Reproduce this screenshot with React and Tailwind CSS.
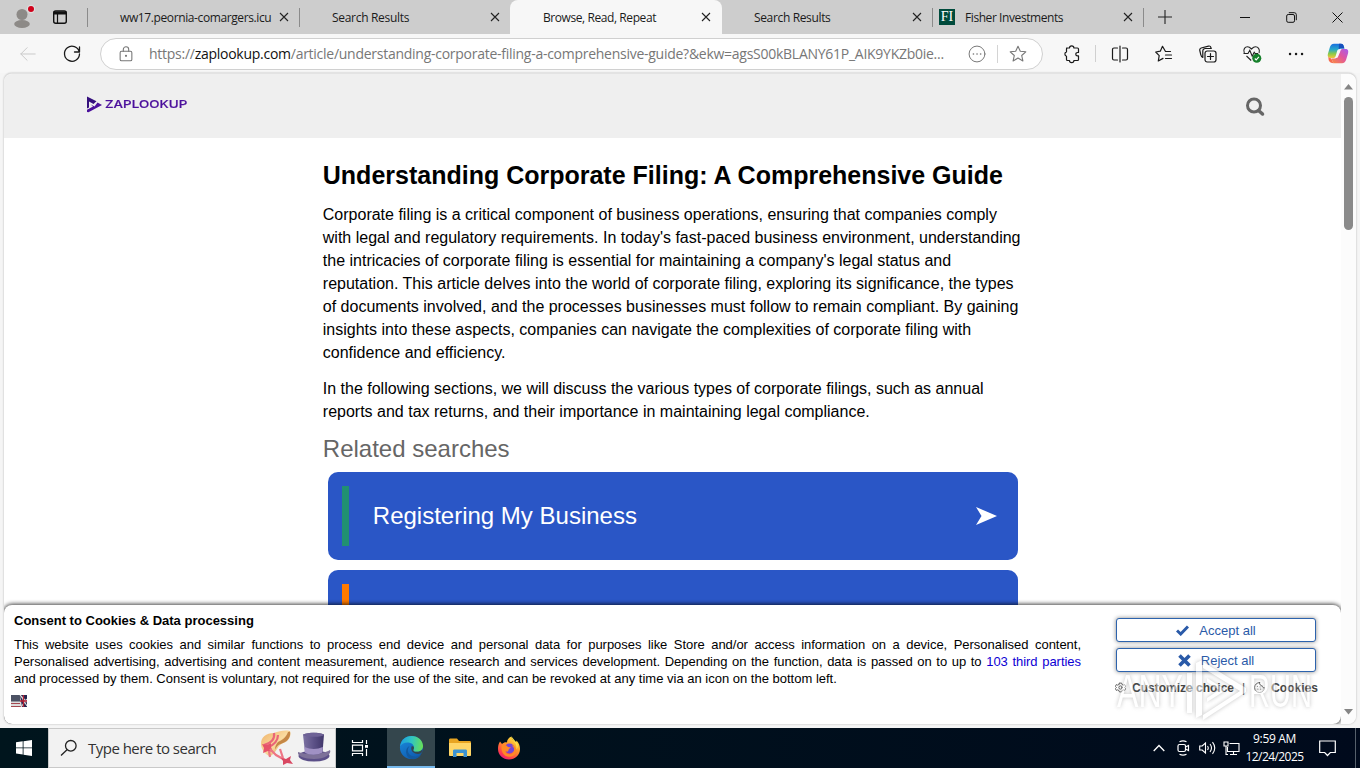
const ui = "font-['Open_Sans','Noto_Sans',sans-serif]";

const tabs = [
    { title: 'ww17.peornia-comargers.icu', tracking: 'tracking-[-0.39px]', className: 'w-[212px] pl-[33px] pr-[10px]', line: true },
    { title: 'Search Results', tracking: 'tracking-[-0.3px]', className: 'w-[211px] pl-[33px] pr-[10px]' },
    { title: 'Browse, Read, Repeat', tracking: 'tracking-[-0.42px]', className: 'w-[212px] rounded-t-lg bg-[#f7f7f7] pl-[33px] pr-[11px]' },
    { title: 'Search Results', tracking: 'tracking-[-0.35px]', className: 'w-[210px] pl-[32px] pr-[10px]' },
    { title: 'Fisher Investments', tracking: 'tracking-[-0.42px]', className: 'w-[211px] pl-[7px] pr-[10px]', icon: true, line: true },
];

const article = [
    [
        'Corporate filing is a critical component of business operations, ensuring that companies comply',
        "with legal and regulatory requirements. In today's fast-paced business environment, understanding",
        "the intricacies of corporate filing is essential for maintaining a company's legal status and",
        'reputation. This article delves into the world of corporate filing, exploring its significance, the types',
        'of documents involved, and the processes businesses must follow to remain compliant. By gaining',
        'insights into these aspects, companies can navigate the complexities of corporate filing with',
        'confidence and efficiency.',
    ],
    [
        'In the following sections, we will discuss the various types of corporate filings, such as annual',
        'reports and tax returns, and their importance in maintaining legal compliance.',
    ],
];

function Icon({ size = 20, className = '', stroke = 1.1, children }) {
    return (
        <svg
            width={size}
            height={size}
            viewBox="0 0 20 20"
            fill="none"
            stroke="currentColor"
            strokeWidth={stroke}
            strokeLinecap="round"
            strokeLinejoin="round"
            className={`shrink-0 ${className}`}
        >
            {children}
        </svg>
    );
}

function CloseIcon() {
    return (
        <svg width="10" height="10" viewBox="0 0 10 10" stroke="#222" strokeWidth="1.1" className="shrink-0">
            <path d="M1 1l8 8M9 1l-8 8" />
        </svg>
    );
}

const starPath = 'M10 2.2l2.3 5 5.5.6-4.1 3.7 1.2 5.4L10 14.1l-4.9 2.8 1.2-5.4L2.2 7.8l5.5-.6z';

function TabStrip() {
    return (
        <div className="flex h-[34px] shrink-0 items-stretch bg-[#cdcdcd]">
            <div className="flex w-[87px] shrink-0 items-center">
                <svg width="87" height="34" viewBox="0 0 87 34">
                    <circle cx="22" cy="14.5" r="5.5" fill="#8d8a87" />
                    <ellipse cx="22" cy="24" rx="7.8" ry="4" fill="#8d8a87" />
                    <circle cx="31" cy="9" r="4.2" fill="#dedede" />
                    <circle cx="31" cy="9" r="3" fill="#d0021b" />
                    <rect x="53.7" y="11" width="12.6" height="12.3" rx="2" fill="none" stroke="#111" strokeWidth="1.4" />
                    <path d="M53.5 11.5h13v3h-13z" fill="#111" />
                    <path d="M57.5 14v9" stroke="#111" strokeWidth="1.2" />
                </svg>
            </div>
            {tabs.map((tab, i) => (
                <div key={i} className={`relative flex shrink-0 items-center ${tab.className}`}>
                    {tab.line && <span className="absolute left-0 top-2 h-[19px] w-px bg-[#8b8b8b]" />}
                    {tab.line && <span className="absolute -right-px top-2 h-[19px] w-px bg-[#8b8b8b]" />}
                    {tab.icon && (
                        <span className="mr-[10px] flex size-4 items-center justify-center bg-[#004b3c] font-['Liberation_Serif',serif] text-[14px] leading-none text-white">
                            FI
                        </span>
                    )}
                    <span className={`flex-1 whitespace-nowrap pt-px text-xs text-[#1b1b1b] ${tab.tracking}`}>{tab.title}</span>
                    <CloseIcon />
                </div>
            ))}
            <div className="flex w-[44px] items-center justify-center">
                <svg width="14" height="14" viewBox="0 0 14 14" stroke="#222" strokeWidth="1.1">
                    <path d="M7 0v14M0 7h14" />
                </svg>
            </div>
            <div className="ml-auto flex w-[138px] items-center">
                <div className="flex w-[46px] justify-center">
                    <svg width="10" height="10" stroke="#111"><path d="M0 5.5h10" /></svg>
                </div>
                <div className="flex w-[46px] justify-center">
                    <svg width="11" height="11" viewBox="0 0 11 11" fill="none" stroke="#111">
                        <rect x=".7" y="2.5" width="7.8" height="7.8" rx="1.5" />
                        <path d="M2.8.7h5.5a2 2 0 0 1 2 2v5.5" />
                    </svg>
                </div>
                <div className="flex w-[46px] justify-center">
                    <svg width="11" height="11" viewBox="0 0 11 11" stroke="#111"><path d="M.5.5l10 10M10.5.5l-10 10" /></svg>
                </div>
            </div>
        </div>
    );
}

function CopilotIcon() {
    return (
        <svg width="22" height="21" viewBox="0 0 22 21">
            <defs>
                <linearGradient id="cpA" x1="0" y1="0" x2="0" y2="1">
                    <stop offset="0" stopColor="#1a6fe0" />
                    <stop offset=".4" stopColor="#28a9c9" />
                    <stop offset=".7" stopColor="#8ccb48" />
                    <stop offset="1" stopColor="#f5c73a" />
                </linearGradient>
                <linearGradient id="cpB" x1="1" y1="0" x2="0" y2="1">
                    <stop offset="0" stopColor="#a45cf0" />
                    <stop offset=".45" stopColor="#e0559f" />
                    <stop offset="1" stopColor="#fb8b3f" />
                </linearGradient>
            </defs>
            <path d="M7 .8h7c1.6 0 2.2.8 2.6 2l.8 2.6h-3.4c-1.5 0-3.3.8-3.7 2.2l-1.6 5.4c-.4 1.4-1.2 2-2.6 2H3.5C.9 15 .3 13 1 10.6l1.8-6C3.5 2.2 4.8.8 7 .8z" fill="url(#cpA)" />
            <path d="M15 20.2H8c-1.6 0-2.2-.8-2.6-2l-.8-2.6H7c1.5 0 3.3-.8 3.7-2.2L13.3 8c.4-1.400 1.200-2 2.600-2h2.600c2.600 0 3.200 2 2.500 4.400l-1.800 6c-.7 2.400-2 3.800-4.200 3.800z" fill="url(#cpB)" />
            <path d="M11.5 7.5l2 .1-2.800 7-2.200-.2z" fill="#f7f7f7" />
            <path d="M12 .8h2c1.600 0 2.200.8 2.600 2l.8 2.600h-3.400c-1.100 0-1.800.4-2.300 1.200z" fill="#1650bd" />
            <path d="M1.300 14c2 1.300 3.100.9 3.700 2.900.5 1.800 1.100 3.300 3 3.300-3.500.2-5.400-.5-6.300-2.900z" fill="#f66c4e" />
        </svg>
    );
}

function Toolbar() {
    return (
        <div className="flex h-[39px] shrink-0 items-center bg-[#f7f7f7] text-[#1a1a1a]">
            <div className="flex w-14 shrink-0 justify-center text-[#c9c9c9]">
                <Icon size={18}><path d="M18 10H2M9 3l-7 7 7 7" /></Icon>
            </div>
            <div className="flex w-8 shrink-0 justify-center">
                <Icon size={20} stroke={1.3}><path d="M17.3 8A7.5 7.5 0 1 0 17.5 10M17.5 3v5h-5" /></Icon>
            </div>
            <div className="ml-3 flex h-8 w-[943px] shrink-0 items-center rounded-full border border-[#d0d0d0] bg-white text-[#777]">
                <Icon size={18} className="ml-4" stroke={1.2}>
                    <rect x="3.5" y="7" width="13" height="10.5" rx="1.5" />
                    <path d="M7 7V5a3 3 0 0 1 6 0v2" />
                    <circle cx="10" cy="12" r=".6" fill="currentColor" />
                </Icon>
                <span className="ml-[14px] w-[795px] shrink-0 whitespace-nowrap pt-px text-sm tracking-[-0.265px] text-[#777]">
                    https://<span className="text-[#111]">zaplookup.com</span>/article/understanding-corporate-filing-a-comprehensive-guide?&amp;ekw=agsS00kBLANY61P_AIK9YKZb0ie...
                </span>
                <Icon size={18} className="ml-6">
                    <circle cx="10" cy="10" r="8.8" />
                    <path d="M6 10h.1M10 10h.1M14 10h.1" strokeWidth="1.8" />
                </Icon>
                <span className="ml-[11px] h-[18px] w-px bg-[#d4d4d4]" />
                <Icon size={20} className="ml-[10px]"><path d={starPath} /></Icon>
            </div>
            <div className="ml-[19px] flex w-5 shrink-0 justify-center">
                <Icon size={20} stroke={1.2}>
                    <path d="M4.5 4h3a2.2 2.2 0 0 1 4.400 0h3.600a1 1 0 0 1 1 1v3.500h-1a1.700 1.700 0 0 0 0 3.400h1v3.600a1 1 0 0 1-1 1h-3.600a2.200 2.200 0 0 1-4.400 0h-2a1 1 0 0 1-1-1v-3.200a2.300 2.300 0 0 1 0-4.400V5a1 1 0 0 1 1-1z" />
                </Icon>
            </div>
            <span className="ml-[13px] h-[17px] w-px bg-[#d0d0d0]" />
            <div className="ml-[1px] flex shrink-0">
                <div className="flex w-[45px] justify-center">
                    <Icon size={20} stroke={1.2}>
                        <path d="M10 2v16M7.5 4H4a1.5 1.5 0 0 0-1.5 1.5v9A1.5 1.5 0 0 0 4 16h3.500M12.5 4H16a1.5 1.5 0 0 1 1.5 1.5v9A1.5 1.5 0 0 1 16 16h-3.500" />
                    </Icon>
                </div>
                <div className="flex w-11 justify-center">
                    <Icon size={20} stroke={1.2}>
                        <path d="M16.5 7.5h-5L8.500 2.300 6.300 7.200 1.700 8l3.500 3.700-.9 5.300 4.700-2.600M11.500 11h6M11.500 14.500h6" />
                    </Icon>
                </div>
                <div className="flex w-11 justify-center">
                    <Icon size={20} stroke={1.2}>
                        <rect x="7" y="7" width="11" height="11" rx="2.2" />
                        <path d="M12.5 9.500v6M9.500 12.500h6M4.800 13.500C3.200 12.800 3 11.500 2.700 10.300L1.800 6.500A2 2 0 0 1 3.200 4l7.300-1.900a2 2 0 0 1 2.400 1.400l.2 1M4.800 13.500V7a2.500 2.500 0 0 1 2.500-2.500h6" />
                    </Icon>
                </div>
                <div className="flex w-11 justify-center">
                    <svg width="20" height="20" viewBox="0 0 20 20" fill="none" stroke="#222" strokeWidth="1.1">
                        <path d="M2.300 9C.7 5 3.300 2.800 5.500 2.800c2 0 3 1.200 4 2.200 1-1 2-2.200 4-2.200 2.300 0 4.800 2.200 3.600 6.200M4.500 12l4.700 4.500M1.500 9.500H6l1.800-3.300 2.400 6 2-4 1 1.300h3" />
                        <circle cx="14.8" cy="14.3" r="4.5" fill="#16802b" stroke="none" />
                        <path d="M12.800 14.500l1.400 1.400 2.700-3" stroke="#fff" />
                    </svg>
                </div>
                <div className="flex w-11 justify-center">
                    <Icon size={20}><path d="M4 10h.1M10 10h.1M16 10h.1" strokeWidth="2.4" /></Icon>
                </div>
            </div>
            <div className="flex w-10 shrink-0 justify-center pb-px"><CopilotIcon /></div>
        </div>
    );
}

function Logo() {
    return (
        <div className="flex items-center gap-[3px] text-[#4b109c]">
            <svg width="15" height="17" viewBox="0 0 15 17">
                <path d="M0 .5l9.5 4.7-3 2.800L2 5.500v6L0 12.500z" fill="#35107d" />
                <path d="M3.500 8.200l4 2.200L10.500 6.500 15 9 1.500 16.300 0 16v-2.300l6-3.200z" fill="#4b109c" />
            </svg>
            <span className="origin-left scale-x-[1.22] font-[Inter,sans-serif] text-[11px] font-medium leading-none [-webkit-text-stroke:0.2px_#4b109c]">ZAPLOOKUP</span>
        </div>
    );
}

function SearchCard({ title, bar }) {
    return (
        <div className="ml-[5px] flex h-[88px] w-[690px] shrink-0 items-center rounded-[10px] bg-[#2a56c6] pl-[14px] pr-[21px]">
            <span className={`h-[60px] w-[7px] ${bar}`} />
            <span className="ml-6 flex-1 text-2xl text-white">{title}</span>
            {title && (
                <svg width="21" height="18" viewBox="0 0 21 18" fill="#fff"><path d="M0 0l21 9-21 9 5.5-9z" /></svg>
            )}
        </div>
    );
}

function Flag() {
    return (
        <svg width="16" height="12" viewBox="0 0 16 12">
            <rect width="16" height="12" fill="#ddd" />
            <path d="M0 8.5h9M0 11.5h11" stroke="#a34851" />
            <rect width="9" height="6.500" fill="#4c5264" />
            <path d="M9 0h7v12h-5z" fill="#23264f" />
            <path d="M9 0l7 7M16 4l-6 8M10 1l6 10" stroke="#ddd" strokeWidth="1.1" />
            <path d="M9 6h7M12.5 0v12" stroke="#b52235" strokeWidth="1.3" />
        </svg>
    );
}

function Watermark() {
    return (
        <svg
            width="225"
            height="70"
            viewBox="0 0 225 70"
            fill="#fff"
            className="pointer-events-none absolute left-[1108px] top-[50px] font-['Liberation_Sans',sans-serif] text-[47px] opacity-50 drop-shadow-[0_0_2px_#888]"
        >
            <text x="5" y="52" textLength="66" lengthAdjust="spacingAndGlyphs">ANY</text>
            <text x="137" y="52" textLength="63" lengthAdjust="spacingAndGlyphs">RUN</text>
            <path d="M75 18h5v40h-5zM84 8l6-3v55l-6 3z" />
            <path d="M91 7l43 26v4L91 65v-5l37-24-37-23zM95 23l19 12-19 12v-4l12-8-12-8z" />
        </svg>
    );
}

const consentButton = 'flex h-6 w-[200px] items-center justify-center gap-[10px] rounded-[3px] border border-[#2d63ad] bg-white shadow-[0_0_4px_#888]';

function CookieBanner() {
    return (
        <div className="absolute bottom-0 left-0 flex h-[119px] w-[1337px] rounded-lg bg-white text-[13px] leading-[17px] text-black shadow-[0_0_4px_1px_rgba(0,0,0,0.75)]">
            <div className="ml-[10px] mt-[7px] w-[1067px] shrink-0">
                <p className="text-[13px] font-bold leading-[18px]">Consent to Cookies &amp; Data processing</p>
                <div className="mt-[6px] text-[13px]">
                    <p className="text-justify tracking-[-0.03px] [text-align-last:justify]">This website uses cookies and similar functions to process end device and personal data for purposes like Store and/or access information on a device, Personalised content,</p>
                    <p className="text-justify tracking-[-0.03px] [text-align-last:justify]">
                        Personalised advertising, advertising and content measurement, audience research and services development. Depending on the function, data is passed on to up to{' '}
                        <span className="text-[#0d00d4]">103 third parties</span>
                    </p>
                    <p className="whitespace-nowrap">and processed by them. Consent is voluntary, not required for the use of the site, and can be revoked at any time via an icon on the bottom left.</p>
                </div>
                <div className="-ml-[3px] mt-2"><Flag /></div>
            </div>
            <div className="ml-[35px] mt-[13px] w-[210px] shrink-0 text-[#2a5aa8]">
                <button className={consentButton}>
                    <svg width="13" height="11" viewBox="0 0 13 11" fill="none" stroke="currentColor" strokeWidth="3"><path d="M1 5.5l3.7 3.5L12 1.5" /></svg>
                    <span className="text-[13px]">Accept all</span>
                </button>
                <button className={`mt-[6px] ${consentButton}`}>
                    <svg width="13" height="13" viewBox="0 0 13 13" stroke="currentColor" strokeWidth="3.6"><path d="M1.5 1.5l10 10M11.5 1.5l-10 10" /></svg>
                    <span className="text-[13px]">Reject all</span>
                </button>
                <div className="-ml-px mt-2 flex items-center whitespace-nowrap text-[12px] font-bold text-[#444]">
                    <Icon size={11} stroke={1.5} className="-mt-[3px] mr-[6px]">
                        <path d="M8 2h4l.7 2.500 2.700 1.200 2.200-1 1.700 3.300-1.800 2 1.800 2-1.700 3.300-2.200-1-2.700 1.200L12 18H8l-.7-2.500-2.700-1.200-2.200 1L.7 12l1.800-2-1.800-2 1.700-3.300 2.200 1 2.700-1.200z" />
                        <circle cx="10" cy="10" r="3" />
                    </Icon>
                    <span>Customize choice</span>
                    <span className="ml-[8px] mr-[9px] font-normal">|</span>
                    <Icon size={11} stroke={1.5} className="-mt-[3px] mr-[6px]">
                        <path d="M10 1a9 9 0 1 0 9 9c-2 1-4-.5-4-3-3 0-5-2-5-6zM6 8h.1M7 13h.1M12 13h.1M11 9h.1" />
                    </Icon>
                    <span>Cookies</span>
                </div>
            </div>
            <Watermark />
        </div>
    );
}

function Page() {
    return (
        <div className="mx-1 flex h-[651px] shrink-0 overflow-hidden rounded-lg border-t border-[#e3e3e3] bg-white shadow-[0_0_2px_#aaa]">
            <div className="relative flex w-[1337px] shrink-0 flex-col overflow-hidden font-['Liberation_Sans',Arial,sans-serif] text-black">
                <header className="flex h-16 shrink-0 items-center justify-between bg-[#efefef] pl-[83px] pr-[76px]">
                    <div className="-mt-1"><Logo /></div>
                    <svg width="20" height="20" viewBox="0 0 20 20" fill="none" stroke="#666" className="mt-px">
                        <circle cx="9" cy="8.500" r="6.500" strokeWidth="3" />
                        <path d="M13.500 13.500l4 3.500" strokeWidth="3.500" strokeLinecap="round" />
                    </svg>
                </header>
                <main className="ml-[318.8px] flex h-[600px] w-[700px] shrink-0 flex-col">
                    <h1 className="mt-[21px] whitespace-nowrap text-[25px] font-bold leading-8">Understanding Corporate Filing: A Comprehensive Guide</h1>
                    <div className="mt-3 flex flex-col gap-[13px]">
                        {article.map((lines, i) => (
                            <p key={i} className="text-base leading-[23px]">
                                {lines.map((line) => (
                                    <span key={line} className="block whitespace-nowrap">{line}</span>
                                ))}
                            </p>
                        ))}
                    </div>
                    <h2 className="mt-[10px] text-2xl leading-8 text-[#666]">Related searches</h2>
                    <div className="mt-[7px] flex flex-col gap-[10px]">
                        <SearchCard title="Registering My Business" bar="bg-[#219072]" />
                        <SearchCard title="" bar="bg-[#ff7a00]" />
                    </div>
                </main>
                <CookieBanner />
            </div>
            <div className="flex flex-1 flex-col items-center bg-[#fcfcfc] pt-[10px] pb-[9px]">
                <svg width="9" height="6" viewBox="0 0 9 6" fill="#858585"><path d="M4.5 0L9 5.5H0z" /></svg>
                <span className="mt-[7px] h-[133px] w-[9px] rounded-full bg-[#8a8a8a]" />
                <svg width="9" height="6" viewBox="0 0 9 6" fill="#858585" className="mt-auto"><path d="M4.5 5.5L9 0H0z" /></svg>
            </div>
        </div>
    );
}

function Hats() {
    return (
        <svg width="72" height="38" viewBox="0 0 72 38">
            <defs>
                <linearGradient id="straw" x1="0" y1="0" x2="1" y2="1">
                    <stop offset="0" stopColor="#eeb067" />
                    <stop offset=".5" stopColor="#fadb9f" />
                    <stop offset="1" stopColor="#d09650" />
                </linearGradient>
                <linearGradient id="top" x1="0" y1="0" x2="1" y2="0">
                    <stop offset="0" stopColor="#7c72a2" />
                    <stop offset=".5" stopColor="#5d5288" />
                    <stop offset="1" stopColor="#40366a" />
                </linearGradient>
            </defs>
            <path d="M1 15C1 8 6 4 14 4c5-2 11-3 16-2 2 5-2 11-7 12-5 2-6 8-10 11-1 1-2 2-4 2-4-2-8-7-8-12z" fill="url(#straw)" />
            <path d="M18 13c4-2 8-4 10-10l2-.5c1 5-2 10-8 12-4 1-5 3-7 6 0-3 1-5 3-7.500z" fill="#c58746" />
            <path d="M14 4c1 6-3 10-10 12M18 6c0 5-4 10-11 13" stroke="#ea6678" strokeWidth="2.2" fill="none" />
            <path d="M2 15l5 1 4-2 0 4 2 5-5-1-5 2 1-5z" fill="#e65369" />
            <path d="M10 20l6 6 9 5M20 20l3 9M9 22l1 6" stroke="#ee7585" strokeWidth="2.2" fill="none" />
            <path d="M21 29l5 1 5-3-1 4 3 4-6-1-4 2 0-4z" fill="#d94862" />
            <ellipse cx="54" cy="27" rx="15.500" ry="5.500" fill="#5b4f88" />
            <path d="M38 23c7 3 24 3 32-2 2 4-5 9-16 9-10 0-17-3-16-7z" fill="#7d7199" />
            <path d="M43 5.500c6-2.500 16-2.500 21 0l-1.500 18c-5 3-13 3-17.500 0z" fill="url(#top)" />
            <path d="M44.500 18c6 2.500 12.500 2.500 18.300 0l-.4 5.500c-5 3-13 3-17.500 0z" fill="#a091c4" />
            <ellipse cx="53.500" cy="5.800" rx="10.500" ry="2" fill="#6e6296" />
        </svg>
    );
}

function EdgeIcon() {
    return (
        <svg width="25" height="25" viewBox="0 0 26 26">
            <defs>
                <linearGradient id="edA" x1="0" y1=".3" x2="1" y2=".4">
                    <stop offset="0" stopColor="#1b9de2" />
                    <stop offset=".5" stopColor="#31c5c0" />
                    <stop offset="1" stopColor="#67df58" />
                </linearGradient>
                <linearGradient id="edB" x1="0" y1="0" x2=".6" y2="1">
                    <stop offset="0" stopColor="#1a8de0" />
                    <stop offset="1" stopColor="#0f5cb0" />
                </linearGradient>
            </defs>
            <circle cx="13" cy="13" r="12" fill="url(#edB)" />
            <path d="M1.200 12C2 5 7 1 13 1c7 0 12 5 12 10.500 0 4-3 6-6.500 6-3 0-4-1-3.500-2.500 1-2.500.5-6-4-7-4-.9-8 .6-9.800 4z" fill="url(#edA)" />
            <path d="M11 11.500c-4 5-1 11 6 11 2.500 0 4.500-.8 6-2.300C21 24 17 25.500 13 25 7 24 5 14 11 11.500z" fill="#12599f" />
            <path d="M13 12c3-1 3 2 2 3-.7 1.500.5 2.500 3.500 2.500 2.500 0 4.500-1 5.700-2.500.6 1-.2 2.800-1.500 4-4 2-11.500-.5-9.700-7z" fill="#34464d" />
        </svg>
    );
}

function FirefoxIcon() {
    return (
        <svg width="24" height="24" viewBox="0 0 24 24">
            <defs>
                <linearGradient id="ff" x1=".8" y1="0" x2=".2" y2="1">
                    <stop offset="0" stopColor="#fff04a" />
                    <stop offset=".4" stopColor="#ff9a27" />
                    <stop offset=".8" stopColor="#ff3d4b" />
                    <stop offset="1" stopColor="#e31587" />
                </linearGradient>
            </defs>
            <path d="M3 5.500L5 8c2-2 4-2 5-1.500C10 3.500 12 1.500 14.500.5c0 3 3 4 4.500 6l.5-2C22 7 23 10 23 13c0 6-5 10.500-11 10.500S1 19 1 13c0-3 .5-5 2-7.500z" fill="url(#ff)" />
            <circle cx="12.500" cy="12.500" r="5" fill="#7545d6" />
            <path d="M5 9c3-1 5 .5 6 2l3 .5c-1 1-2 1-2.500 2.500 0 2-2 2-3 1 0 3 5 5 8 1.500 2-3 0-6-2-7 4 0 6 4 4 8-3 5-11 4-13-1C4.500 14 4 11 5 9z" fill="#ff8a25" />
            <path d="M14.500.5c0 4 6 6 5 13 3-4 0-7-1-8z" fill="#ffe14a" />
        </svg>
    );
}

function Taskbar() {
    return (
        <div className="flex h-10 shrink-0 bg-linear-to-r from-[#00151d] to-[#000a1c] text-white">
            <div className="flex w-12 items-center justify-center">
                <svg width="16" height="16" viewBox="0 0 16 16" fill="#fff">
                    <path d="M0 2.200l6.700-.9v6.200H0zM7.500 1.200L16 0v7.500H7.500zM0 8.300h6.700v6.200L0 13.600zM7.500 8.300H16V16l-8.500-1.200z" />
                </svg>
            </div>
            <div className="flex w-72 shrink-0 items-center border border-[#c9c9c9] bg-[#f2f2f2] text-[#333]">
                <svg width="18" height="18" viewBox="0 0 18 18" fill="none" stroke="#222" strokeWidth="1.3" className="ml-[11px]">
                    <circle cx="10.8" cy="6.8" r="5.3" />
                    <path d="M7 10.700L1 16.500" />
                </svg>
                <span className="ml-[10px] w-[172px] whitespace-nowrap text-[15px] tracking-[-0.52px]">Type here to search</span>
                <Hats />
            </div>
            <div className="flex w-[51px] items-center justify-center pr-[3px]">
                <svg width="18" height="16" viewBox="0 0 18 16" fill="none" stroke="#fff" strokeWidth="1.2">
                    <path d="M1.500 0v2.500h10V0M1.500 16v-2.500h10V16M1.500 5.200h10v5.600h-10zM15.500 0v4M15.500 9v7" />
                    <path d="M14 5h3v2.800h-3z" fill="#fff" stroke="none" />
                </svg>
            </div>
            <div className="flex w-12 items-center justify-center border-b-2 border-[#76b9ed] bg-[#34464d]"><EdgeIcon /></div>
            <div className="flex w-[49px] items-center justify-center">
                <svg width="22" height="20" viewBox="0 0 22 20">
                    <path d="M0 2c0-1 .5-1.500 1.500-1.500H8L10 3h10.500c1 0 1.500.5 1.500 1.500V17H0z" fill="#e8a522" />
                    <path d="M0 5h22v12c0 .8-.5 1-1 1H1c-.5 0-1-.2-1-1z" fill="#ffd667" />
                    <path d="M4 19v-6c0-1 .5-1.500 1.500-1.500h11c1 0 1.500.5 1.500 1.500v6h-3.500v-4h-7v4z" fill="#3d93d2" />
                </svg>
            </div>
            <div className="ml-px flex w-12 items-center justify-center"><FirefoxIcon /></div>
            <div className="ml-auto flex items-center">
                <svg width="12" height="8" viewBox="0 0 12 8" fill="none" stroke="#fff" strokeWidth="1.3"><path d="M.7 7L6 1.500 11.300 7" /></svg>
                <svg width="13" height="16" viewBox="0 0 13 16" fill="none" stroke="#fff" strokeWidth="1.2" className="ml-3">
                    <rect x="1" y="4.500" width="7.500" height="7" rx="1.500" />
                    <path d="M8.500 7l3-1.500v5l-3-1.500M2.500 1.700Q6 0 9.500 1.700M2.500 14.300Q6 16 9.500 14.300" />
                </svg>
                <svg width="17" height="14" viewBox="0 0 17 14" fill="none" stroke="#fff" strokeWidth="1.1" className="ml-[9px]">
                    <path d="M.7 5v4h2.500L6.500 12V2L3.200 5zM8.500 5q1.500 2 0 4M11 3q3 4 0 8M13.500 1.200q4.500 5.800 0 11.600" />
                </svg>
                <svg width="17" height="15" viewBox="0 0 17 15" fill="none" stroke="#fff" strokeWidth="1.1" className="ml-[7px]">
                    <path d="M6.500 2.500H16v8H4.500V6M7 13.500h7M10.500 10.500v3M1 1h4v4H1zM3 5v8.500h2" />
                </svg>
                <div className="ml-[4px] w-[61px] text-center text-xs leading-[18px] tracking-[-0.58px]">
                    <div className="tracking-[-0.35px]">9:59 AM</div>
                    <div className="whitespace-nowrap">12/24/2025</div>
                </div>
                <svg width="17" height="17" viewBox="0 0 17 17" fill="none" stroke="#fff" strokeWidth="1.2" className="ml-[14px]">
                    <path d="M.7 1h15.600v11.500h-5l-2.800 3-2.800-3h-5z" />
                </svg>
                <span className="ml-[19px] mr-[4px] h-10 w-px bg-[#56606b]" />
            </div>
        </div>
    );
}

export default function App() {
    return (
        <div className={`flex h-[768px] w-[1360px] flex-col overflow-hidden bg-[#f5f5f5] ${ui}`}>
            <TabStrip />
            <Toolbar />
            <Page />
            <div className="h-1 shrink-0" />
            <Taskbar />
        </div>
    );
}
